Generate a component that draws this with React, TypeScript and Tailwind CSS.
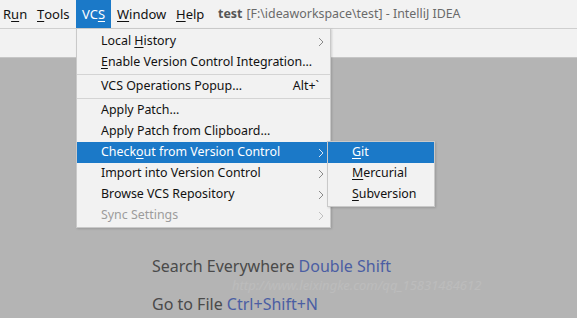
import React from "react";

const U = ({ children }: { children: React.ReactNode }) => (
  <span className="underline underline-offset-2 decoration-1">{children}</span>
);

const Arrow = ({ color = "#8a8a8a" }: { color?: string }) => (
  <svg width="6" height="10" viewBox="0 0 6 10" className="absolute right-[6px] top-1/2 -translate-y-1/2">
    <path d="M1 1 L5 5 L1 9" fill="none" stroke={color} strokeWidth="1" />
  </svg>
);

type Item = {
  label: React.ReactNode;
  arrow?: boolean;
  shortcut?: string;
  active?: boolean;
  disabled?: boolean;
};

const Row = ({ item }: { item: Item }) => (
  <div
    className={`relative h-[21px] flex items-center pl-[24px] pr-[10px] ${
      item.active ? "bg-[#1b79c8] text-white" : item.disabled ? "text-[#9c9c9c]" : "text-[#111]"
    }`}
  >
    <span className="flex-1 whitespace-nowrap">{item.label}</span>
    {item.shortcut && <span className="mr-[1px]">{item.shortcut}</span>}
    {item.arrow && <Arrow color={item.active ? "#d8e6f5" : item.disabled ? "#c0c0c0" : "#8a8a8a"} />}
  </div>
);

const Sep = () => <div className="h-[3px] flex items-center"><div className="h-px w-full bg-[#d4d4d4]" /></div>;

export default function App() {
  const font = { fontFamily: '"Noto Sans", "Open Sans", sans-serif' };
  return (
    <div
      className="relative w-[577px] h-[318px] overflow-hidden bg-[#b4b4b4] text-[12.4px] leading-none"
      style={font}
    >
      {/* menu bar */}
      <div className="h-[29px] bg-[#f2f2f2] border-b border-[#cfcfcf] flex items-stretch text-[#111] text-[13px]">
        <div className="w-[37px] pl-[3px] flex items-center">R<U>u</U>n</div>
        <div className="w-[39px] flex items-center"><U>T</U>ools</div>
        <div className="w-[35px] flex items-center justify-center bg-[#1b79c8] text-white">VC<U>S</U></div>
        <div className="w-[59px] pl-[6px] flex items-center"><U>W</U>indow</div>
        <div className="w-[48px] pl-[6px] flex items-center"><U>H</U>elp</div>
        <div className="flex items-center text-[#555] whitespace-nowrap text-[12.4px]">
          <span className="font-bold">test</span>
          <span className="ml-[4px] text-[#6a6a6a]">[F:\ideaworkspace\test] - IntelliJ IDEA</span>
        </div>
      </div>
      {/* toolbar strip */}
      <div className="h-[29px] bg-[#f2f2f2] border-b border-[#c6c6c6]" />

      {/* welcome hints */}
      <div className="absolute left-[152px] top-[258px] text-[16px] text-[#4a4a4a] leading-none">
        <div>
          Search Everywhere <span className="text-[#4b5ea3]">Double Shift</span>
        </div>
        <div className="mt-[22px]">
          Go to File <span className="text-[#4b5ea3]">Ctrl+Shift+N</span>
        </div>
      </div>
      <div className="absolute left-[232px] top-[279px] text-[13px] leading-none italic text-white/10 whitespace-nowrap">
        http://www.leixingke.com/qq_15831484612
      </div>

      {/* VCS menu */}
      <div className="absolute left-[76px] top-[28px] w-[255px] bg-[#f2f2f2] border border-[#c9c9c9] shadow-[1px_1px_2px_rgba(0,0,0,0.15)] pt-[2px] pb-[1px]">
        <Row item={{ label: <>Local <U>H</U>istory</>, arrow: true }} />
        <Row item={{ label: <><U>E</U>nable Version Control Integration...</> }} />
        <Sep />
        <Row item={{ label: "VCS Operations Popup...", shortcut: "Alt+`" }} />
        <Sep />
        <Row item={{ label: "Apply Patch..." }} />
        <Row item={{ label: "Apply Patch from Clipboard..." }} />
        <Row item={{ label: <>Check<U>o</U>ut from Version Control</>, arrow: true, active: true }} />
        <Row item={{ label: "Import into Version Control", arrow: true }} />
        <Row item={{ label: "Browse VCS Repository", arrow: true }} />
        <Row item={{ label: "Sync Settings", arrow: true, disabled: true }} />
      </div>

      {/* submenu */}
      <div className="absolute left-[327px] top-[141px] w-[108px] bg-[#f2f2f2] border border-[#c9c9c9] shadow-[1px_1px_2px_rgba(0,0,0,0.15)] pb-[1px]">
        <Row item={{ label: <><U>G</U>it</>, active: true }} />
        <Row item={{ label: <><U>M</U>ercurial</> }} />
        <Row item={{ label: <><U>S</U>ubversion</> }} />
      </div>
    </div>
  );
}
